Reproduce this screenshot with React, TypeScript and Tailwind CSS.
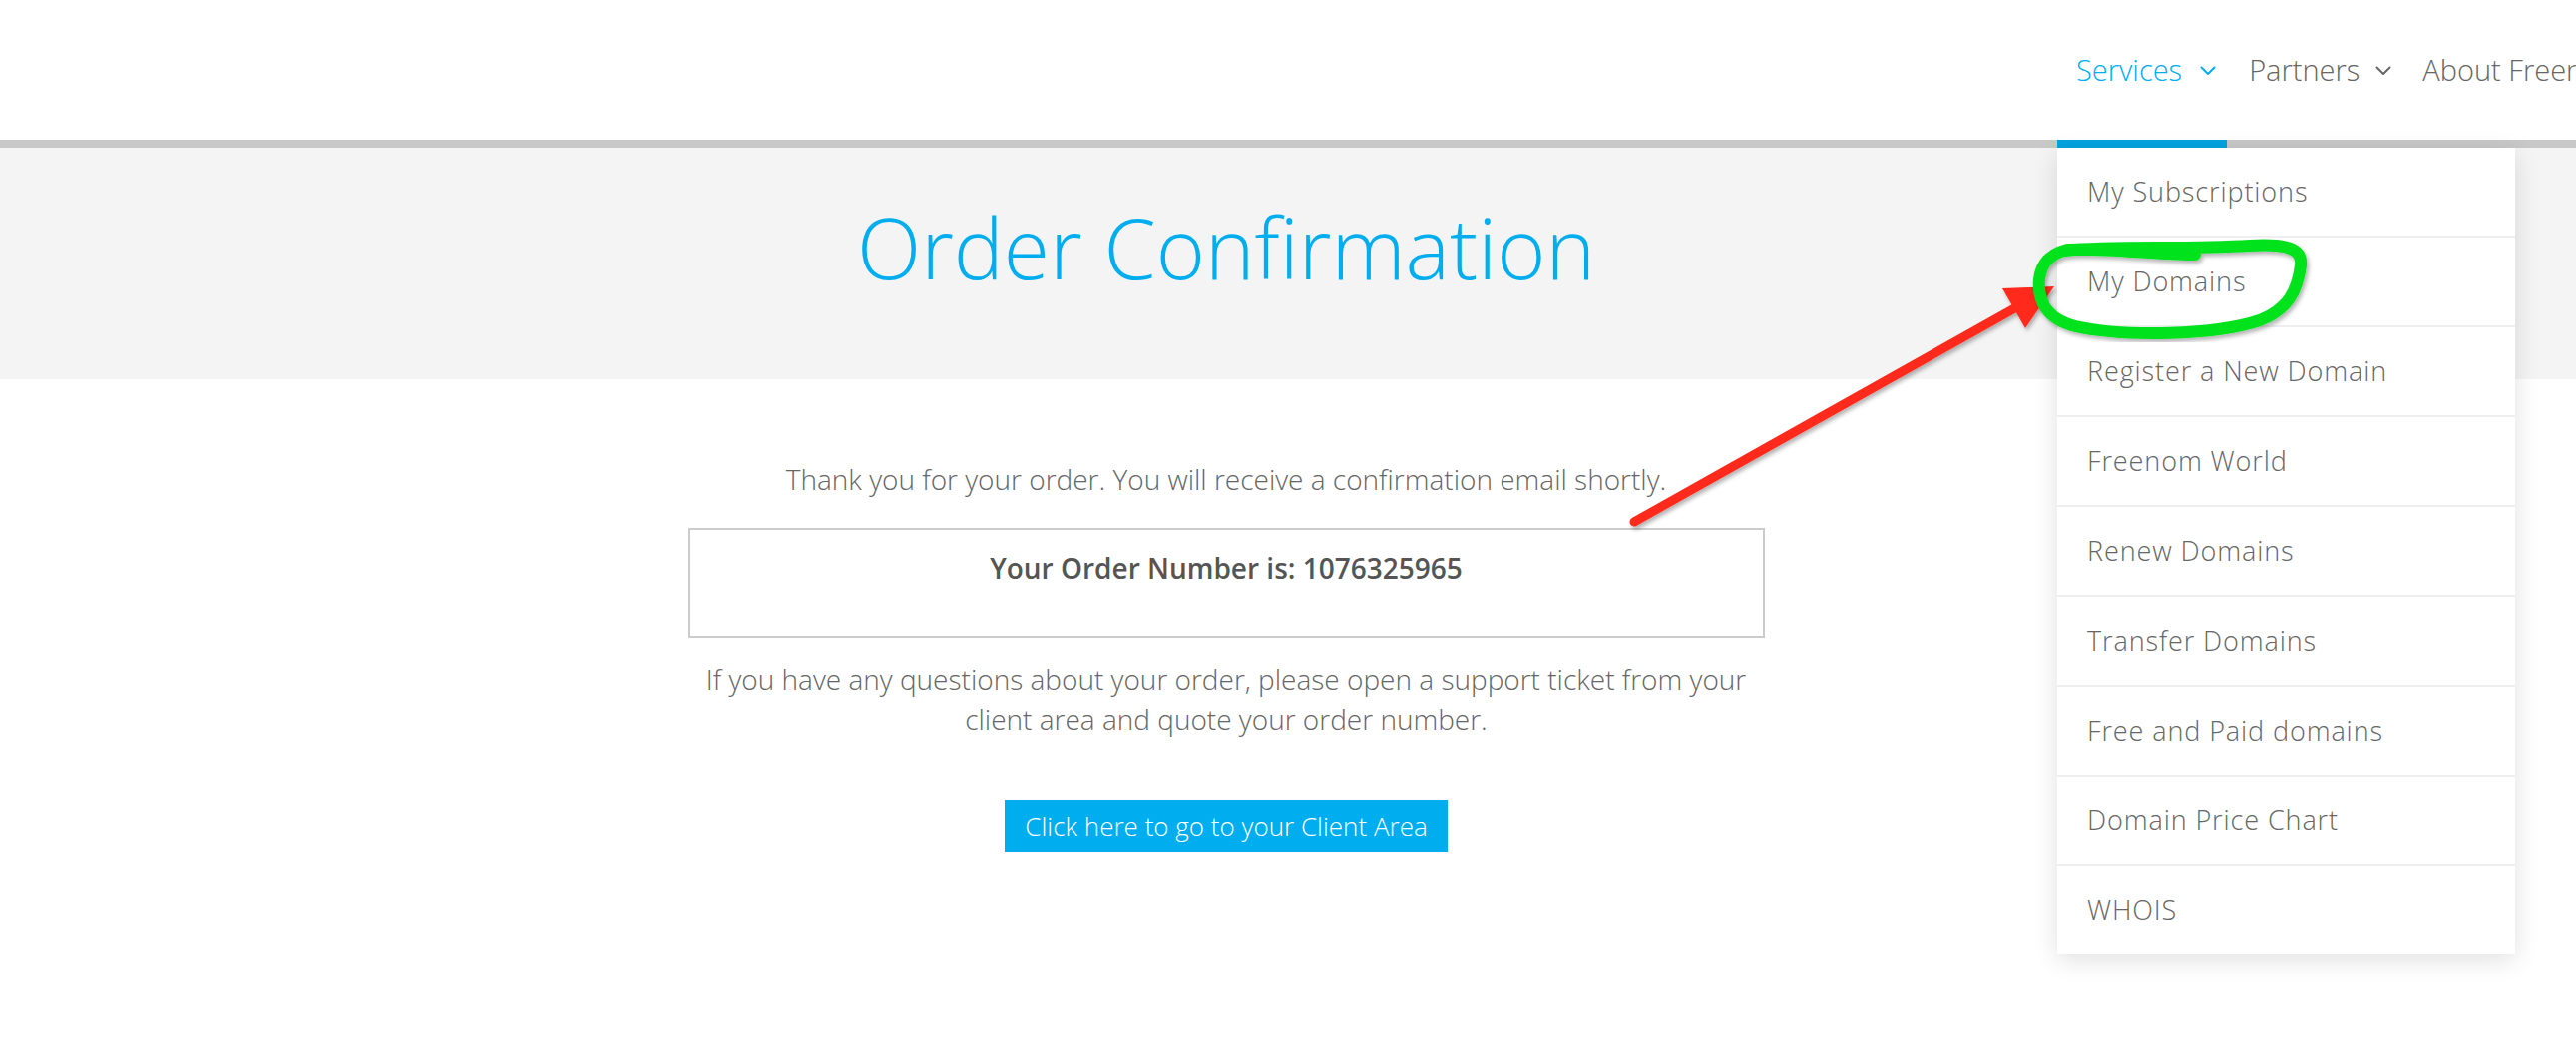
const services = [
  'My Subscriptions',
  'My Domains',
  'Register a New Domain',
  'Freenom World',
  'Renew Domains',
  'Transfer Domains',
  'Free and Paid domains',
  'Domain Price Chart',
  'WHOIS',
];

function Chevron({ className }: { className: string }) {
  return (
    <svg width="16" height="10" viewBox="0 0 16 10" fill="none" className={className}>
      <path d="M1.5 1.5 L8 8 L14.5 1.5" stroke="currentColor" strokeWidth="2" strokeLinecap="round" strokeLinejoin="round" />
    </svg>
  );
}

export default function App() {
  return (
    <div className="relative h-[1058px] w-full overflow-hidden bg-white font-['Open_Sans',sans-serif]">
      {/* Top nav */}
      <header className="flex h-[140px] items-center">
        <div className="w-[2062px] shrink-0" />
        <ul className="flex whitespace-nowrap text-[29px] font-light leading-[40px]">
          <li className="flex items-center gap-[18px] pl-[19px] pr-[13px] text-[#00aeef]">
            Services <Chevron className="mt-[2px]" />
          </li>
          <li className="flex items-center gap-[16px] pl-[20px] pr-[13px] text-[#666]">
            Partners <Chevron className="mt-[2px]" />
          </li>
          <li className="flex items-center pl-[18px] text-[#666]">About Freenom</li>
        </ul>
      </header>

      {/* Rule under nav */}
      <div className="flex h-[8px] bg-[#c8c8c8]">
        <div className="w-[2062px] shrink-0" />
        <div className="w-[170px] bg-[#00a3e0]" />
      </div>

      {/* Page title */}
      <section className="h-[232px] bg-[#f4f4f4] pt-[58px]">
        <h1 className="w-[2458px] text-center text-[84px] font-light leading-none text-[#00aeef]">
          Order Confirmation
        </h1>
      </section>

      {/* Content */}
      <main className="flex w-[2458px] flex-col items-center pt-[80px]">
        <div className="flex w-[1079px] flex-col items-center text-center text-[28px] font-light leading-[40px] text-[#666]">
          <p>Thank you for your order. You will receive a confirmation email shortly.</p>
          <div className="mt-[29px] h-[110px] w-full border-2 border-[#cccccc] pt-[18px]">
            <h4 className="font-semibold text-[#555]">Your Order Number is: 1076325965</h4>
          </div>
          <p className="mt-[21px]">
            If you have any questions about your order, please open a support ticket from your client area and quote your order number.
          </p>
          <button className="mt-[62px] h-[52px] w-[444px] bg-[#00aeef] text-[26px] font-light leading-[52px] text-white">
            Click here to go to your Client Area
          </button>
        </div>
      </main>

      {/* Services dropdown */}
      <ul className="absolute left-[2062px] top-[148px] w-[459px] bg-white shadow-[0_6px_24px_rgba(0,0,0,0.12)]">
        {services.map((s, i) => (
          <li
            key={s}
            className={`px-[30px] py-[24px] text-[27px] font-light leading-[40px] tracking-[0.9px] text-[#666] ${i < services.length - 1 ? 'border-b-2 border-[#efefef]' : ''}`}
          >
            {s}
          </li>
        ))}
      </ul>

      {/* Annotations */}
      <svg className="pointer-events-none absolute inset-0" width="2582" height="1058" viewBox="0 0 2582 1058">
        <defs>
          <filter id="sh" x="-10%" y="-10%" width="120%" height="120%">
            <feDropShadow dx="2" dy="3" stdDeviation="2" floodColor="#000" floodOpacity="0.3" />
          </filter>
        </defs>
        <g filter="url(#sh)">
          <path d="M1638 523 L2030 303" stroke="#ff2b1c" strokeWidth="9" strokeLinecap="round" />
          <polygon points="2059,287 2007,289 2030,329" fill="#ff2b1c" />
        </g>
        <path
          d="M2070 251 C2120 246 2190 250 2255 246 C2290 244 2308 248 2306 266 C2303 290 2294 310 2265 321 C2220 336 2130 338 2080 327 C2052 320 2042 302 2044 280 C2046 262 2056 254 2072 250 C2110 248 2170 256 2200 255"
          stroke="#00e21e"
          strokeWidth="12"
          fill="none"
          strokeLinecap="round"
          strokeLinejoin="round"
          filter="url(#sh)"
        />
      </svg>
    </div>
  );
}
